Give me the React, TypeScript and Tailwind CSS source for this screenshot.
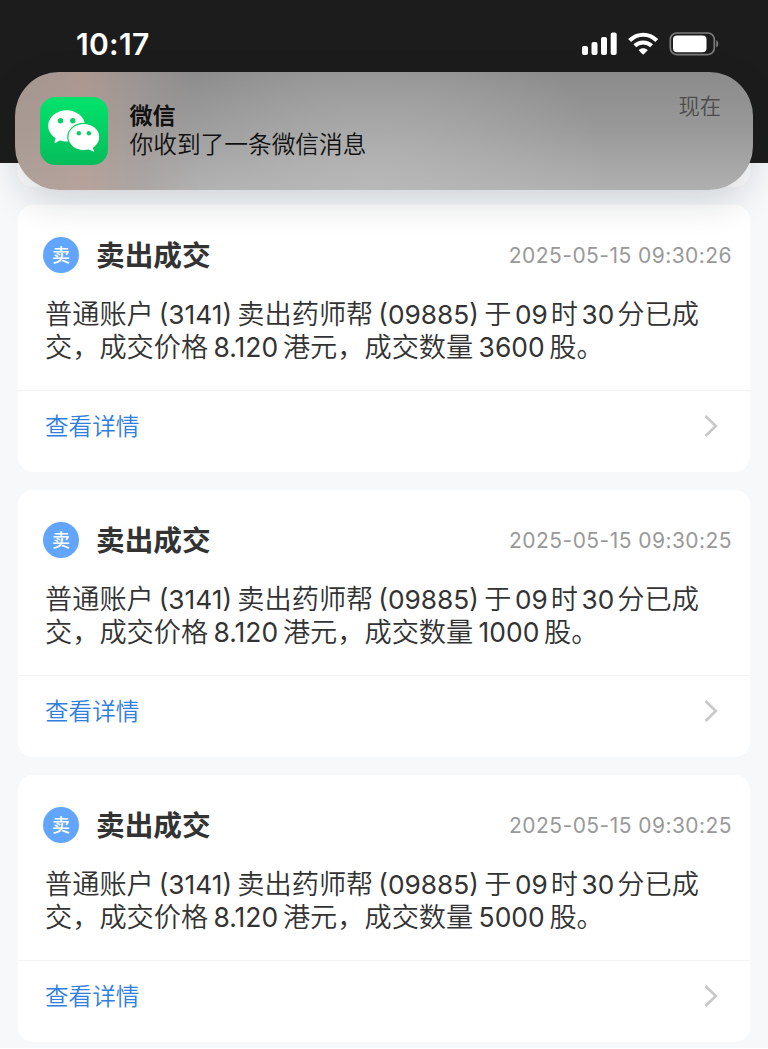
import React from 'react';

interface Trade {
  time: string;
  amount: string;
}

const trades: Trade[] = [
  { time: '2025-05-15 09:30:26', amount: '3600' },
  { time: '2025-05-15 09:30:25', amount: '1000' },
  { time: '2025-05-15 09:30:25', amount: '5000' },
];

const Code: React.FC<{ children: React.ReactNode }> = ({ children }) => (
  <span className="ml-[5px] mr-[5.3px] text-[26.3px] font-[380]">{children}</span>
);

const Clock: React.FC<{ children: React.ReactNode }> = ({ children }) => (
  <span className="ml-[3.6px] mr-[3px] text-[26.2px] font-[380]">{children}</span>
);

const Num: React.FC<{ children: React.ReactNode }> = ({ children }) => (
  <span className="ml-[5.4px] mr-[4.8px] text-[26.4px] font-[380]">{children}</span>
);

const StatusBar = () => (
  <div className="flex h-[163px] shrink-0 items-start justify-between bg-[#1c1c1c] pl-[76px] pr-[49px] pt-[28px]">
    <span className="text-[30px] font-semibold leading-[32px] tracking-[0.3px] text-white">10:17</span>
    <div className="flex pt-[4px]">
      <svg width="36" height="24" viewBox="0 0 36 24" fill="#fff">
        <rect x="0" y="14" width="6" height="9" rx="2" />
        <rect x="9.5" y="10" width="6" height="13" rx="2" />
        <rect x="19" y="5" width="6" height="18" rx="2" />
        <rect x="28.7" y="0.5" width="6" height="22.5" rx="2" />
      </svg>
      <svg className="ml-[10px]" width="31" height="24" viewBox="0 0 31 24" fill="none" stroke="#fff" strokeWidth="4.2">
        <path d="M1.6 8.6 C9.5 0.8 20.9 0.8 28.8 8.6" />
        <path d="M6.8 13.7 C11.4 9.4 19 9.4 23.6 13.7" />
        <path d="M15.2 22.8 L10.6 18.2 C13.4 15.7 17 15.7 19.8 18.2 Z" fill="#fff" stroke="none" />
      </svg>
      <svg className="ml-[10px]" width="50" height="24" viewBox="0 0 50 24">
        <rect x="1.3" y="1" width="44" height="21.6" rx="6.5" fill="none" stroke="#7b7b7b" strokeWidth="1.7" />
        <rect x="4" y="3.5" width="33.5" height="16.7" rx="4" fill="#fff" />
        <path d="M47.2 8.3 C50 9.5 50 14.2 47.2 15.4 Z" fill="#7b7b7b" />
      </svg>
    </div>
  </div>
);

const WeChatIcon = () => (
  <svg width="68" height="68" viewBox="0 0 68 68">
    <defs>
      <linearGradient id="wechat" x1="0" y1="0" x2="0" y2="1">
        <stop offset="0" stopColor="#02e36c" />
        <stop offset="1" stopColor="#06bd5b" />
      </linearGradient>
      <mask id="behind">
        <rect width="68" height="68" fill="#fff" />
        <ellipse cx="43.8" cy="40" rx="16.6" ry="14.2" fill="#000" />
      </mask>
    </defs>
    <rect width="68" height="68" rx="15.5" fill="url(#wechat)" />
    <g mask="url(#behind)" fill="#fff">
      <ellipse cx="26.6" cy="28.8" rx="18.4" ry="15.6" />
      <path d="M16.3 39.5 L14.4 45.3 Q14.6 46.1 15.6 45.7 L22.5 42 Z" />
    </g>
    <ellipse cx="43.8" cy="40" rx="15.4" ry="13" fill="#fff" />
    <path d="M52 49.5 L54.2 54 Q54.2 54.9 53.4 54.5 L46.5 51.5 Z" fill="#fff" />
    <g fill="#08cf63">
      <circle cx="20.5" cy="23.8" r="2.7" />
      <circle cx="32.8" cy="23.8" r="2.7" />
      <circle cx="38.8" cy="36.3" r="2.2" />
      <circle cx="48.9" cy="36.3" r="2.2" />
    </g>
  </svg>
);

const Banner = () => (
  <div className="absolute left-[15px] top-[72px] flex h-[118px] w-[738px] rounded-[44px] bg-[linear-gradient(90deg,#b09a91b0_0%,#b89d93b0_10%,#a89d9980_17%,#99999900_25%),radial-gradient(ellipse_240px_180px_at_360px_118px,#bcbcbcb0,#a8a8a800),linear-gradient(180deg,#8b8b8b_0%,#999999_50%,#b0b0b0_100%)] pl-[25px] pr-[32px] pt-[25px] shadow-[0_12px_36px_rgba(20,22,28,0.16)]">
    <WeChatIcon />
    <div className="ml-[21.5px] flex-1 pt-[5px] text-[#111111]">
      <div className="text-[23px] font-bold leading-[28px]">微信</div>
      <div className="pt-px text-[23.7px] font-[350] leading-[28px]">你收到了一条微信消息</div>
    </div>
    <span className="-mt-[5px] text-[21.3px] font-[350] leading-[28px] text-[#4c4c4c]">现在</span>
  </div>
);

const TradeCard: React.FC<{ trade: Trade }> = ({ trade }) => (
  <div className="flex h-[267px] shrink-0 flex-col rounded-[15px] bg-white">
    <div className="flex h-[185.6px] flex-col border-b border-[#f2f2f2] pl-[25px] pr-[18px] pt-[32px]">
      <div className="flex h-[36px] items-center">
        <span className="flex size-[36px] items-center justify-center rounded-full bg-[#61a5ff] pt-px text-[18px] font-medium text-white">卖</span>
        <span className="ml-[17px] flex-1 pt-[2px] text-[28.7px] font-bold leading-[36px] text-[#333333]">卖出成交</span>
        <span className="pt-[2px] text-[21px] leading-[36px] tracking-[0.45px] text-[#999999]">{trade.time}</span>
      </div>
      <div className="ml-[2px] mt-[26px] whitespace-nowrap text-[27.2px] font-[350] leading-[32px] text-[#333333]">
        <div className="h-[32px]">
          普通账户<Code>(3141)</Code>卖出药师帮<Code>(09885)</Code>于<Clock>09</Clock>时<Clock>30</Clock>分已成
        </div>
        <div className="h-[32px]">
          交，成交价格<Num>8.120</Num>港元，成交数量<Num>{trade.amount}</Num>股。
        </div>
      </div>
    </div>
    <div className="flex flex-1 items-center justify-between pb-[11px] pl-[27px] pr-[32px]">
      <span className="pt-[2px] text-[23.6px] font-[350] leading-[32px] text-[#2f7fe0]">查看详情</span>
      <svg width="14" height="22" viewBox="0 0 14 22" fill="none" stroke="#c8c8c8" strokeWidth="2.6">
        <path d="M1.5 1 L11.8 11 L1.5 21" />
      </svg>
    </div>
  </div>
);

export default function App() {
  return (
    <div className="relative flex h-[1049px] w-[768px] flex-col overflow-hidden border-b border-white bg-[#f6f8fa] font-[Inter,'Noto_Sans_CJK_SC',sans-serif]">
      <StatusBar />
      <div className="flex flex-col px-[18px]">
        <div className="h-[24px] shrink-0 rounded-b-[15px] bg-white" />
        <div className="mt-[18px] flex flex-col gap-[18.2px]">
          {trades.map((trade) => (
            <TradeCard key={trade.amount} trade={trade} />
          ))}
        </div>
      </div>
      <Banner />
    </div>
  );
}
